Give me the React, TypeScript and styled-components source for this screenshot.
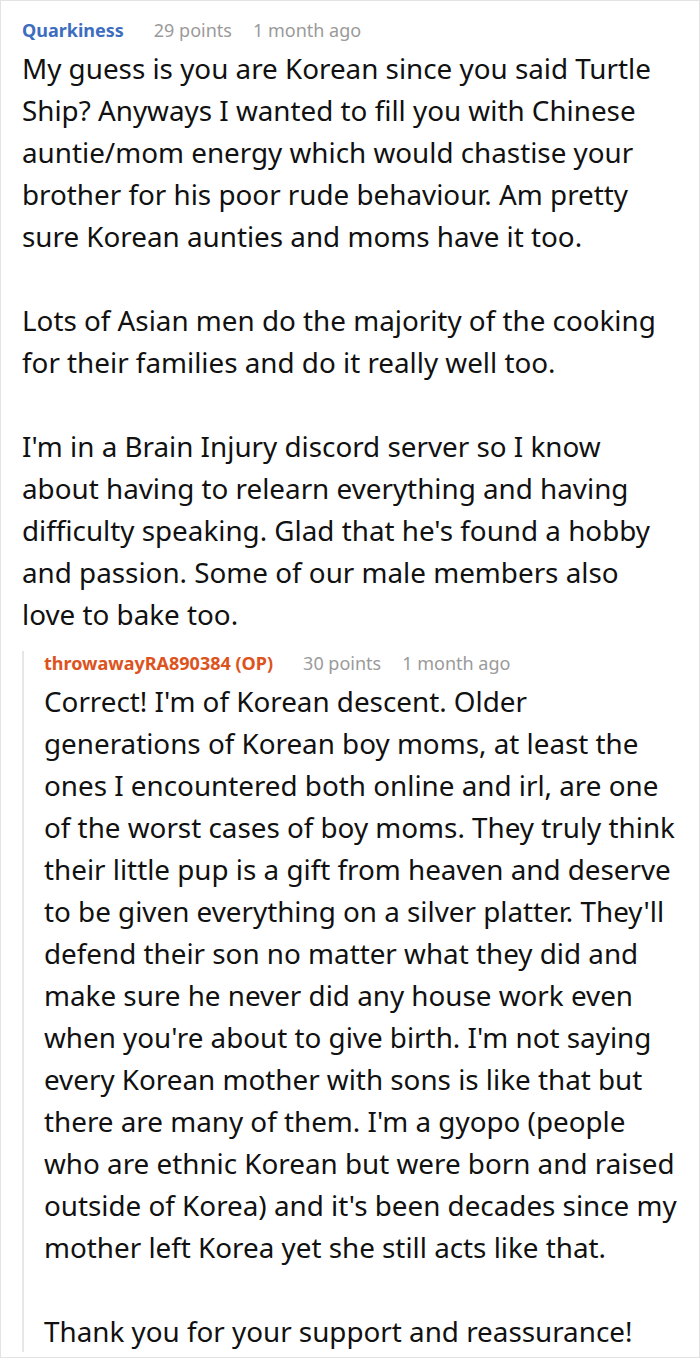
import React from "react";
import styled, { createGlobalStyle } from "styled-components";

const Global = createGlobalStyle`
  html, body { margin: 0; padding: 0; background: #fff; }
  body { font-family: "Noto Sans", "Open Sans", sans-serif; }
`;

const Card = styled.div`
  box-sizing: border-box;
  width: 700px;
  border: 1px solid #e3e3e3;
  padding: 17px 21px 5px 21px;
  background: #fff;
`;

const Comment = styled.div`
  display: flex;
  flex-direction: column;
`;

const Reply = styled.div`
  display: flex;
  flex-direction: column;
  margin-top: 16px;
  border-left: 2px solid #e6e6e6;
  padding-left: 20px;
`;

const Meta = styled.div`
  display: flex;
  align-items: baseline;
  height: 24px;
  line-height: 24px;
  font-size: 18px;
  margin-bottom: 5px;
`;

const Author = styled.span<{ $op?: boolean }>`
  font-weight: 700;
  color: ${(p) => (p.$op ? "#dd5320" : "#3c6dbf")};
  margin-right: 30px;
`;

const Stat = styled.span`
  color: #9a9a9a;
  margin-right: 21px;
`;

const Body = styled.div`
  font-size: 27.8px;
  line-height: 42px;
  color: #111;
`;

const Para = styled.p`
  margin: 0;
  & + & { margin-top: 42px; }
`;

export default function App() {
  return (
    <>
      <Global />
      <Card>
        <Comment>
          <Meta>
            <Author>Quarkiness</Author>
            <Stat>29 points</Stat>
            <Stat>1 month ago</Stat>
          </Meta>
          <Body>
            <Para>
              My guess is you are Korean since you said Turtle Ship? Anyways I wanted to fill you with Chinese auntie/mom energy which would chastise your brother for his poor rude behaviour. Am pretty sure Korean aunties and moms have it too.
            </Para>
            <Para>
              Lots of Asian men do the majority of the cooking for their families and do it really well too.
            </Para>
            <Para>
              I'm in a Brain Injury discord server so I know about having to relearn everything and having difficulty speaking. Glad that he's found a hobby and passion. Some of our male members also love to bake too.
            </Para>
          </Body>
        </Comment>
        <Reply>
          <Meta>
            <Author $op>throwawayRA890384 (OP)</Author>
            <Stat>30 points</Stat>
            <Stat>1 month ago</Stat>
          </Meta>
          <Body>
            <Para>
              Correct! I'm of Korean descent. Older generations of Korean boy moms, at least the ones I encountered both online and irl, are one of the worst cases of boy moms. They truly think their little pup is a gift from heaven and deserve to be given everything on a silver platter. They'll defend their son no matter what they did and make sure he never did any house work even when you're about to give birth. I'm not saying every Korean mother with sons is like that but there are many of them. I'm a gyopo (people who are ethnic Korean but were born and raised outside of Korea) and it's been decades since my mother left Korea yet she still acts like that.
            </Para>
            <Para>Thank you for your support and reassurance!</Para>
          </Body>
        </Reply>
      </Card>
    </>
  );
}
